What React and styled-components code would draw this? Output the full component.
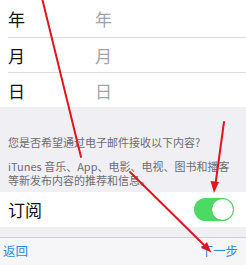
import React from "react";
import styled, { createGlobalStyle } from "styled-components";

const GlobalStyle = createGlobalStyle`
  html, body {
    margin: 0;
    padding: 0;
    background: #efeff4;
  }
  body {
    font-family: "Noto Sans CJK SC", "Liberation Sans", sans-serif;
  }
`;

const Screen = styled.div`
  position: relative;
  width: 246px;
  height: 265px;
  overflow: hidden;
  background: #efeff4;
  display: flex;
  flex-direction: column;
`;

const Group = styled.div`
  background: #ffffff;
`;

const DateRow = styled.div`
  display: grid;
  grid-template-columns: 87px 1fr;
  align-items: center;
  height: ${(p) => p.h}px;
  margin-left: 8px;
  border-bottom: ${(p) => (p.last ? "none" : "1px solid #dcdce0")};
  box-sizing: border-box;
  font-size: 17px;
  line-height: 1;
`;

const Label = styled.span`
  color: #111111;
`;

const Value = styled.span`
  color: #a3a3a8;
`;

const Section = styled.div`
  padding: 28px 8px 5px 8px;
  font-size: 11px;
  line-height: 14px;
  color: #6d6d72;
`;

const Note = styled.p`
  margin: 0 0 ${(p) => p.gap || 0}px 0;
`;

const SwitchRow = styled.div`
  display: flex;
  align-items: center;
  justify-content: space-between;
  height: 35px;
  padding: 0 12px 0 8px;
  background: #ffffff;
  font-size: 17px;
  line-height: 1;
  color: #111111;
`;

const Toggle = styled.div`
  position: relative;
  width: 40px;
  height: 23px;
  border-radius: 12px;
  background: #4cd964;
  display: flex;
  justify-content: flex-end;
  align-items: center;
  padding: 1px;
  box-sizing: border-box;
`;

const Knob = styled.div`
  width: 21px;
  height: 21px;
  border-radius: 50%;
  background: #ffffff;
  box-shadow: 0 0 1px rgba(0, 0, 0, 0.3);
`;

const Spacer = styled.div`
  height: 10px;
  border-bottom: 1px solid #cfcfd3;
`;

const Toolbar = styled.div`
  flex: 1;
  display: flex;
  align-items: center;
  justify-content: space-between;
  padding: 0 8px 0 3px;
  background: #f6f6f8;
  font-size: 12.5px;
  line-height: 1;
  color: #2f86de;
`;

const Overlay = styled.svg`
  position: absolute;
  left: 0;
  top: 0;
  pointer-events: none;
`;

export default function App() {
  const rows = [
    { label: "年", h: 38 },
    { label: "月", h: 35 },
    { label: "日", h: 34 },
  ];
  return (
    <Screen>
      <GlobalStyle />
      <Group>
        {rows.map((r, i) => (
          <DateRow key={r.label} h={r.h} last={i === rows.length - 1}>
            <Label>{r.label}</Label>
            <Value>{r.label}</Value>
          </DateRow>
        ))}
      </Group>
      <Section>
        <Note gap={10}>您是否希望通过电子邮件接收以下内容?</Note>
        <Note>
          iTunes 音乐、App、电影、电视、图书和播客
          <br />
          等新发布内容的推荐和信息。
        </Note>
      </Section>
      <SwitchRow>
        <span>订阅</span>
        <Toggle>
          <Knob />
        </Toggle>
      </SwitchRow>
      <Spacer />
      <Toolbar>
        <span>返回</span>
        <span>下一步</span>
      </Toolbar>
      <Overlay width="246" height="265" viewBox="0 0 246 265">
        <g stroke="#e3141c" strokeWidth="2" strokeLinecap="round" fill="none">
          <path d="M42 -2 L81 157" />
          <path d="M130 172 L204 245" />
          <path d="M224 122 L215.5 184" />
        </g>
        <g fill="#e3141c">
          <polygon points="211,252 201,248 207,242" />
          <polygon points="214,193 210.5,181 219,182" />
        </g>
      </Overlay>
    </Screen>
  );
}
